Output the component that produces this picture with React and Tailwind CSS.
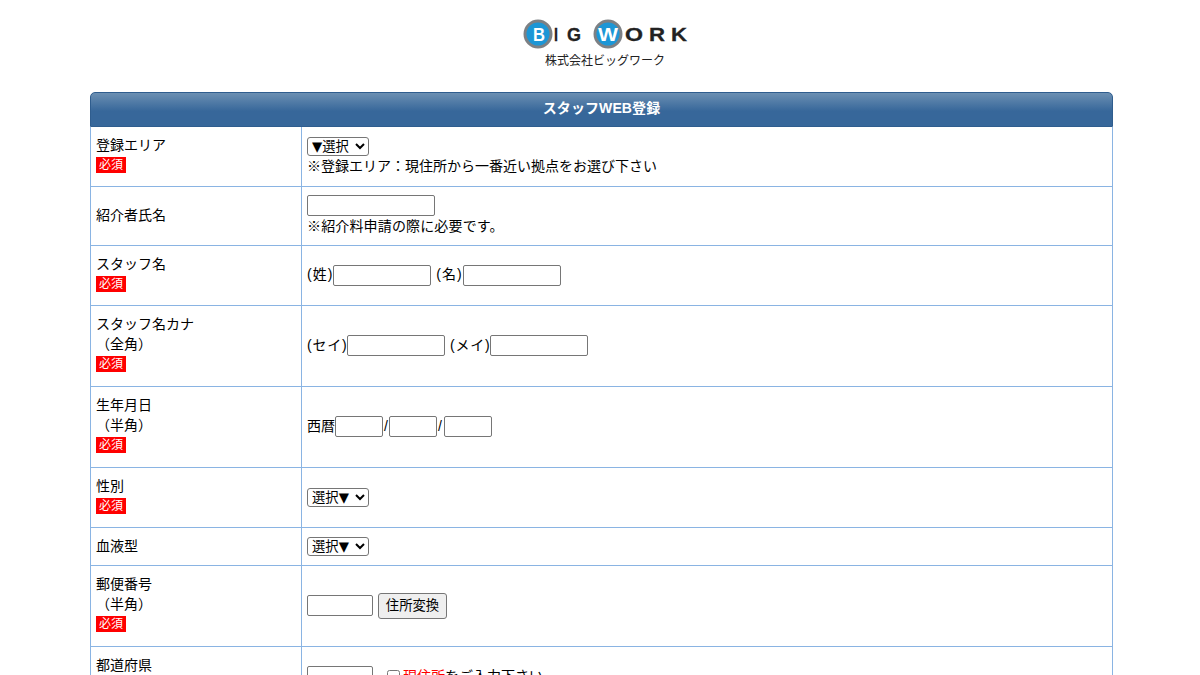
import React from "react";

const font = "font-['Liberation_Sans','Noto_Sans_CJK_JP',sans-serif]";

const Required = () => (
  <div className="leading-none mt-[2px] pb-[6px]">
    <span className="block bg-[#ff0000] text-white text-[12px] leading-[16px] w-[30px] h-[16px] text-center">
      必須
    </span>
  </div>
);

const Input = ({ w }) => (
  <input
    type="text"
    className={`${w} h-[21px] align-middle bg-white border border-[#767676] rounded-[2px]`}
  />
);

const Select = ({ label }) => (
  <select className="w-[62px] h-[19px] align-middle bg-white border border-[#767676] rounded-[3px] font-['DejaVu_Sans','Noto_Sans_CJK_JP',sans-serif] text-[13.33px] leading-none text-black">
    <option>{label}</option>
  </select>
);

const Row = ({ labels, required, children, h }) => (
  <div className={`flex border-b border-[#8ab4e3] ${h}`}>
    <div
      className={`w-[211px] shrink-0 border-r border-[#8ab4e3] px-[5px] flex flex-col justify-center ${required ? "" : "pb-[2px]"}`}
    >
      {labels.map((l) => (
        <div key={l} className="leading-[20px]">
          {l}
        </div>
      ))}
      {required && <Required />}
    </div>
    <div className="flex-1 px-[5px] pb-[1px] flex flex-col justify-center">{children}</div>
  </div>
);

const Logo = () => (
  <svg width="170" height="56" viewBox="0 0 170 56">
    <circle cx="18" cy="17" r="13" fill="#1c96d6" stroke="#7d8084" strokeWidth="3" />
    <circle cx="88" cy="17" r="13" fill="#1c96d6" stroke="#7d8084" strokeWidth="3" />
    <g fontFamily="Liberation Sans, sans-serif" fontWeight="700" fontSize="18">
      <text x="13" y="24" fill="#fff" textLength="12" lengthAdjust="spacingAndGlyphs">B</text>
      <text x="34" y="24" fill="#222" stroke="#222" strokeWidth="0.3" textLength="4" lengthAdjust="spacingAndGlyphs">I</text>
      <text x="47" y="24" fill="#222" stroke="#222" strokeWidth="0.3" textLength="14" lengthAdjust="spacingAndGlyphs">G</text>
      <text x="78" y="24" fill="#fff" textLength="20" lengthAdjust="spacingAndGlyphs">W</text>
      <text x="105" y="24" fill="#222" stroke="#222" strokeWidth="0.3" textLength="18" lengthAdjust="spacingAndGlyphs">O</text>
      <text x="129" y="24" fill="#222" stroke="#222" strokeWidth="0.3" textLength="16" lengthAdjust="spacingAndGlyphs">R</text>
      <text x="151" y="24" fill="#222" stroke="#222" strokeWidth="0.3" textLength="16" lengthAdjust="spacingAndGlyphs">K</text>
    </g>
    <text x="25" y="48" fontFamily="Noto Sans CJK JP, sans-serif" fontSize="12.5" fill="#222" textLength="120" lengthAdjust="spacingAndGlyphs">
      株式会社ビッグワーク
    </text>
  </svg>
);

export default function App() {
  return (
    <div className={`${font} h-[675px] overflow-hidden bg-white text-black text-[14px]`}>
      <div className="flex justify-center pt-[17px] pl-[10px] h-[92px]">
        <Logo />
      </div>
      <div className="mx-[90px] w-[1023px]">
        <div className="h-[35px] pb-[2px] flex items-center justify-center rounded-t-[5px] border border-[#2f5d8e] bg-[linear-gradient(#6b8fb2,#37679a_55%)] text-white font-bold text-[14px] tracking-[0.1px]">
          スタッフWEB登録
        </div>
        <div className="border-x border-[#8ab4e3]">
          <Row labels={["登録エリア"]} required h="h-[60px]">
            <div className="leading-[20px] -mt-[1px]">
              <Select label="▼選択" />
            </div>
            <div className="leading-[20px]">※登録エリア：現住所から一番近い拠点をお選び下さい</div>
          </Row>
          <Row labels={["紹介者氏名"]} h="h-[59px]">
            <div className="leading-[21px]">
              <Input w="w-[128px]" />
            </div>
            <div className="leading-[20px] tracking-[0.15px]">※紹介料申請の際に必要です。</div>
          </Row>
          <Row labels={["スタッフ名"]} required h="h-[60px]">
            <div>
              <span className="tracking-[1px]">(姓)</span>
              <Input w="w-[98px]" />
              <span className="tracking-[1px]"> (名)</span>
              <Input w="w-[98px]" />
            </div>
          </Row>
          <Row labels={["スタッフ名カナ", "（全角）"]} required h="h-[81px]">
            <div>
              <span className="tracking-[0.75px]">(セイ)</span>
              <Input w="w-[98px]" />
              <span className="tracking-[0.75px]"> (メイ)</span>
              <Input w="w-[98px]" />
            </div>
          </Row>
          <Row labels={["生年月日", "（半角）"]} required h="h-[81px]">
            <div>
              西暦<Input w="w-[48px]" />
              <span className="px-[1px]">/</span>
              <Input w="w-[48px]" />
              <span className="pl-[1px] pr-[2px]">/</span>
              <Input w="w-[48px]" />
            </div>
          </Row>
          <Row labels={["性別"]} required h="h-[60px]">
            <div>
              <Select label="選択▼" />
            </div>
          </Row>
          <Row labels={["血液型"]} h="h-[38px]">
            <div>
              <Select label="選択▼" />
            </div>
          </Row>
          <Row labels={["郵便番号", "（半角）"]} required h="h-[81px]">
            <div className="flex items-center gap-[5px]">
              <Input w="w-[66px]" />
              <button className="w-[69px] h-[26px] bg-[#efefef] border border-[#767676] rounded-[3px] text-[13.33px] text-black">
                住所変換
              </button>
            </div>
          </Row>
          <Row labels={["都道府県"]} required h="h-[60px]">
            <div className="flex items-center">
              <Input w="w-[66px]" />
              <input type="checkbox" className="ml-[14px] mr-[3px] w-[13px] h-[13px] appearance-auto" />
              <span>
                <span className="text-[#ff0000]">現住所</span>をご入力下さい
              </span>
            </div>
          </Row>
        </div>
      </div>
    </div>
  );
}
